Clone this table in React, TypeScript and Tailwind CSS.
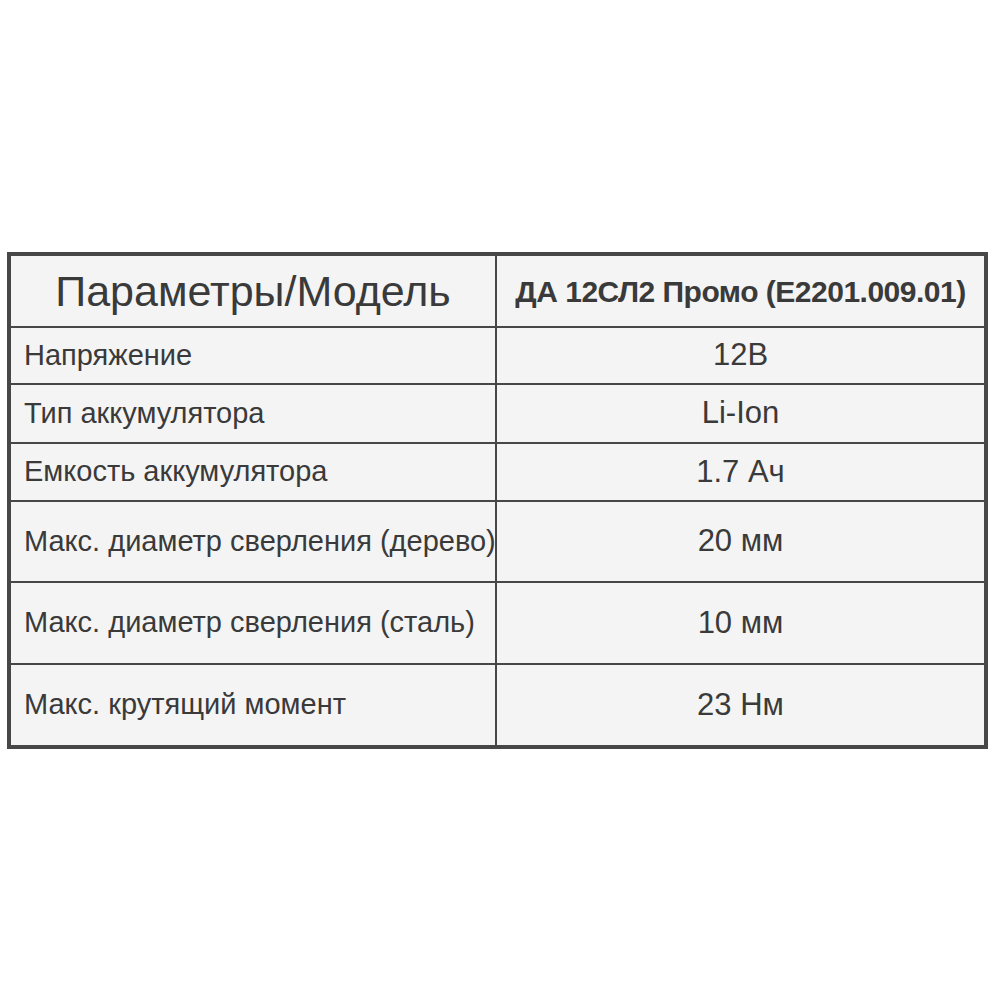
const rows = [
  { name: "Напряжение", value: "12В", h: "h-[57px]" },
  { name: "Тип аккумулятора", value: "Li-Ion", h: "h-[59px]" },
  { name: "Емкость аккумулятора", value: "1.7 Ач", h: "h-[58px]" },
  { name: "Макс. диаметр сверления (дерево)", value: "20 мм", h: "h-[81px]" },
  { name: "Макс. диаметр сверления (сталь)", value: "10 мм", h: "h-[82px]" },
  { name: "Макс. крутящий момент", value: "23 Нм", h: "h-[82px]" },
];

export default function App() {
  return (
    <div className="min-h-[1000px] w-[1000px] bg-white pt-[252px] pl-[7px] font-['Liberation_Sans',Arial,sans-serif] text-[#3a3a3a]">
      <div className="w-[981px] border-4 border-[#474747] bg-[#f4f4f4]">
        {/* header */}
        <div className="flex h-[70px]">
          <div className="flex w-[486px] items-center justify-center border-r-2 border-[#474747] text-[43px]">
            Параметры/Модель
          </div>
          <div className="flex flex-1 items-center justify-center text-[30px] font-bold tracking-[-0.5px] whitespace-nowrap">
            ДА 12СЛ2 Промо (E2201.009.01)
          </div>
        </div>

        {rows.map((r) => (
          <div key={r.name} className={`flex border-t-2 border-[#474747] ${r.h}`}>
            <div className="flex w-[486px] items-center border-r-2 border-[#474747] pl-[13px] text-[29px] whitespace-nowrap">
              {r.name}
            </div>
            <div className="flex flex-1 items-center justify-center text-[31px]">{r.value}</div>
          </div>
        ))}
      </div>
    </div>
  );
}
